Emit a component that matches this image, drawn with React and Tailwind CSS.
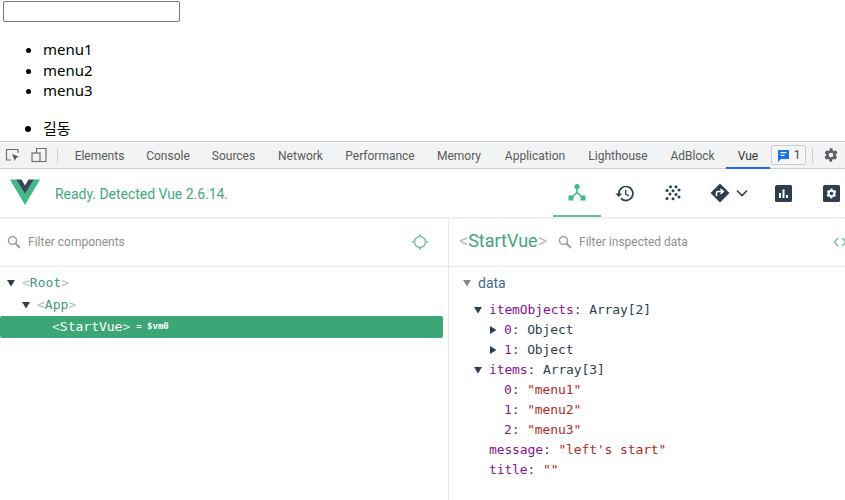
import React from "react";

function Caret({ open = true, color = "#2c3e50", size = 8 }) {
  return (
    <svg width={size} height={size} viewBox="0 0 8 8" className="shrink-0">
      {open ? <path d="M0 1h8L4 7.5z" fill={color} /> : <path d="M1 0v8l6.5-4z" fill={color} />}
    </svg>
  );
}

function Search() {
  return (
    <svg width="14" height="14" viewBox="0 0 14 14" fill="none" stroke="#9b9b9b" strokeWidth="1.5" className="shrink-0">
      <circle cx="5.5" cy="5.5" r="4" />
      <path d="M8.5 8.5 13 13" strokeWidth="1.8" />
    </svg>
  );
}

const tabs = [
  ["Elements", "w-[71px]"],
  ["Console", "w-[66px]"],
  ["Sources", "w-[65px]"],
  ["Network", "w-[69px]"],
  ["Performance", "w-[90px]"],
  ["Memory", "w-[68px]"],
  ["Application", "w-[84px]"],
  ["Lighthouse", "w-[82px]"],
  ["AdBlock", "w-[67px]"],
];

const mono = "font-['DejaVu_Sans_Mono',monospace]";

function Row({ indent, caret, k, children }) {
  return (
    <div className={`flex items-center h-5 text-[13px] leading-5 tracking-[-0.12px] ${mono} ${indent}`}>
      {caret !== undefined ? (
        <span className="w-[15px] shrink-0 flex items-center">
          <Caret open={caret} />
        </span>
      ) : null}
      <span className="text-[#881391]">{k}</span>
      <span className="text-[#444] whitespace-pre">: </span>
      {children}
    </div>
  );
}

const Val = ({ children }) => <span className="text-[#2c3e50]">{children}</span>;
const Str = ({ children }) => <span className="text-[#b02a24] whitespace-pre">{children}</span>;

export default function App() {
  return (
    <div className="w-[845px] h-[500px] overflow-hidden bg-white text-black font-['Noto_Sans','Noto_Sans_CJK_KR',sans-serif] relative">
      <div className="h-[23px] pt-px pl-[3px]">
        <input className="block w-[177px] h-[21px] border border-[#767676] rounded-[2px] bg-white outline-none" />
      </div>
      <ul className="list-disc pl-[43px] mt-4 mb-4 text-[15px] leading-[20.5px]">
        <li>menu1</li>
        <li>menu2</li>
        <li>menu3</li>
      </ul>
      <ul className="list-disc pl-[43px] mt-[14px] text-[15px] leading-[21px] font-['Noto_Sans_CJK_KR',sans-serif]">
        <li>길동</li>
      </ul>

      <div className="absolute left-0 right-0 top-[141px] bottom-0 flex flex-col bg-white">
        {/* DevTools tab bar */}
        <div className="h-[28px] shrink-0 bg-[#f1f3f4] border-y border-[#cbcdd1] flex items-center font-['Roboto',sans-serif] text-xs text-[#5a5a5a]">
          <div className="w-[64px] flex items-center shrink-0 relative h-full">
            <svg width="16" height="16" viewBox="0 0 16 16" className="ml-[5px]" fill="none">
              <path d="M6 13H1.500V2.500H13V6" stroke="#6e6e6e" strokeWidth="1.2" />
              <path d="M7 7l7 2.800-3 1.100L9.900 14z" fill="#5a5a5a" />
            </svg>
            <svg width="16" height="16" viewBox="0 0 16 16" className="ml-[10px]" fill="none" stroke="#6e6e6e" strokeWidth="1.2">
              <path d="M5.500 6V1.500H15V14.500H9" />
              <rect x="1" y="6" width="8" height="8.500" />
            </svg>
            <span className="absolute left-[57px] top-[6px] w-px h-[15px] bg-[#cbcdd1]" />
          </div>
          <div className="flex h-full">
            {tabs.map(([t, w]) => (
              <div key={t} className={`${w} shrink-0 flex items-center justify-center pt-px`}>{t}</div>
            ))}
            <div className="w-[44px] shrink-0 flex items-center justify-center text-[#333] border-b-2 border-[#1a73e8] h-[27px] pt-[2px] -mb-px">Vue</div>
          </div>
          <div className="ml-px h-[20px] w-[35px] rounded-[2px] border border-[#cbcdd1] flex items-center justify-center gap-[4px] bg-[#f5f6f7] text-[#444]">
            <svg width="13" height="13" viewBox="0 0 13 13">
              <path d="M1 1h11v9H4l-3 3z" fill="#1a73e8" />
              <path d="M3.500 3.700h6M3.500 6.300h4" stroke="#fff" strokeWidth="1.2" />
            </svg>
            <span>1</span>
          </div>
          <span className="ml-[6px] w-px h-[15px] bg-[#cbcdd1]" />
          <svg width="16" height="16" viewBox="0 0 24 24" className="ml-[10px]" fill="#5f6368">
            <path d="M19.400 13c.1-.3.1-.7.1-1s0-.7-.1-1l2.100-1.600c.2-.2.2-.4.1-.6l-2-3.500c-.1-.2-.4-.3-.6-.2l-2.500 1c-.5-.4-1.100-.7-1.700-1L14 2.400c0-.2-.2-.4-.5-.4h-3c-.2 0-.4.2-.5.4l-.4 2.700c-.6.2-1.100.6-1.700 1l-2.500-1c-.2-.1-.5 0-.6.2l-2 3.500c-.1.2-.1.4.1.6L4.600 11c0 .3-.1.7-.1 1s0 .7.1 1l-2.100 1.600c-.2.2-.2.4-.1.6l2 3.500c.1.2.4.3.6.2l2.500-1c.5.4 1.100.7 1.700 1l.4 2.700c0 .2.2.4.5.4h3c.2 0 .4-.2.5-.4l.4-2.700c.6-.2 1.100-.6 1.700-1l2.500 1c.2.1.5 0 .6-.2l2-3.500c.1-.2.1-.4-.1-.6zM12 15.500a3.500 3.500 0 1 1 0-7 3.500 3.500 0 0 1 0 7z" />
          </svg>
        </div>

        {/* Vue header */}
        <div className="h-[50px] shrink-0 flex items-center font-['Roboto',sans-serif] border-b-2 border-[#f0f0f0]">
          <svg width="30" height="26" viewBox="0 0 30 26" className="ml-[10px] mb-[2px]">
            <path d="M0 .5h6L15 15 24 .5h6L15 26z" fill="#42b883" />
            <path d="M6 .5h5.500L15 6.500 18.500.5H24L15 15z" fill="#35495e" />
          </svg>
          <span className="ml-[15px] text-sm text-[#42a882] mt-[1px] tracking-[-0.03px]">Ready. Detected Vue 2.6.14.</span>
          <div className="ml-auto -mr-[10px] flex items-center h-full">
            <div className="w-[48px] h-[48px] border-b-2 border-[#6cbc9c] flex items-center justify-center">
              <svg width="18" height="18" viewBox="0 0 18 18" fill="#42b883">
                <circle cx="9" cy="3.500" r="2.600" />
                <rect x="0.500" y="12.500" width="5" height="5" />
                <rect x="12.500" y="12.500" width="5" height="5" />
                <path d="M9 5v5.500M9 9.500 4 14M9 9.500l5 4.500" stroke="#42b883" strokeWidth="1.600" fill="none" />
              </svg>
            </div>
            <div className="w-[48px] flex items-center justify-center">
              <svg width="22" height="21" viewBox="0 0 24 24" fill="#2c3e50">
                <path d="M13 3a9 9 0 0 0-9 9H1l3.890 3.890.07.14L9 12H6a7 7 0 1 1 2.050 4.950l-1.420 1.420A9 9 0 1 0 13 3zm-1 5v5l4.250 2.520.77-1.280-3.520-2.090V8z" />
              </svg>
            </div>
            <div className="w-[48px] flex items-center justify-center">
              <svg width="16" height="16" viewBox="0 0 16 16" fill="#2c3e50">
                <circle cx="5.500" cy="1.800" r="1.500" /><circle cx="11" cy="1.800" r="1.500" />
                <circle cx="2" cy="5.500" r="1.500" /><circle cx="8" cy="5.800" r="1.500" /><circle cx="14" cy="5" r="1.500" />
                <circle cx="5" cy="9" r="1.500" /><circle cx="11" cy="9.500" r="1.500" />
                <circle cx="2" cy="13.500" r="1.500" /><circle cx="8" cy="13.800" r="1.500" /><circle cx="14" cy="12" r="1.500" />
              </svg>
            </div>
            <div className="w-[62px] flex items-center pl-[13px]">
              <svg width="20" height="20" viewBox="0 0 20 20" fill="#2c3e50">
                <path d="M10 0.500 19.500 10 10 19.500.5 10z" />
                <path d="M6.500 13v-3c0-1 .6-1.500 1.500-1.500h4.500M10.500 6l2.800 2.500-2.800 2.500" fill="none" stroke="#fff" strokeWidth="1.600" />
              </svg>
              <svg width="12" height="8" viewBox="0 0 12 8" fill="none" stroke="#2c3e50" strokeWidth="1.600" className="ml-[6px]">
                <path d="M1 1.500 6 6.500l5-5" />
              </svg>
            </div>
            <div className="w-[48px] flex items-center justify-center">
              <svg width="17" height="17" viewBox="0 0 17 17">
                <rect width="17" height="17" rx="1.500" fill="#2c3e50" />
                <path d="M4 8h2v5H4zM7.500 4.500h2V13h-2zM11 10h2v3h-2z" fill="#fff" />
              </svg>
            </div>
            <div className="w-[48px] flex items-center justify-center">
              <svg width="17" height="17" viewBox="0 0 17 17">
                <rect width="17" height="17" rx="1.500" fill="#2c3e50" />
                <path fill="#fff" transform="translate(2.500 2.500) scale(.5)" d="M19.400 13c.1-.3.1-.7.1-1s0-.7-.1-1l2.100-1.600c.2-.2.2-.4.1-.6l-2-3.500c-.1-.2-.4-.3-.6-.2l-2.500 1c-.5-.4-1.100-.7-1.700-1L14 2.400c0-.2-.2-.4-.5-.4h-3c-.2 0-.4.2-.5.4l-.4 2.700c-.6.2-1.100.6-1.700 1l-2.500-1c-.2-.1-.5 0-.6.2l-2 3.500c-.1.2-.1.4.1.6L4.600 11c0 .3-.1.7-.1 1s0 .7.1 1l-2.100 1.600c-.2.2-.2.4-.1.6l2 3.500c.1.2.4.3.6.2l2.500-1c.5.4 1.100.7 1.700 1l.4 2.700c0 .2.2.4.5.4h3c.2 0 .4-.2.5-.4l.4-2.700c.6-.2 1.100-.6 1.700-1l2.500 1c.2.1.5 0 .6-.2l2-3.500c.1-.2.1-.4-.1-.6zM12 15.500a3.500 3.500 0 1 1 0-7 3.500 3.500 0 0 1 0 7z" />
              </svg>
            </div>
          </div>
        </div>

        {/* Split panes */}
        <div className="flex-1 flex min-h-0 font-['Roboto',sans-serif]">
          <div className="w-[449px] shrink-0 border-r border-[#e8e8e8] flex flex-col">
            <div className="h-[48px] shrink-0 border-b border-[#e8e8e8] flex items-center pl-[7px] pr-[20px] pb-[2px]">
              <Search />
              <span className="ml-[7px] text-xs text-[#8f8f8f]">Filter components</span>
              <svg width="16" height="16" viewBox="0 0 16 16" fill="none" stroke="#7fbfae" strokeWidth="1.500" className="ml-auto">
                <circle cx="8" cy="8" r="5.500" />
                <path d="M8 0v3M8 13v3M0 8h3M13 8h3" />
              </svg>
            </div>
            <div className={`pt-[5px] pr-[5px] ${mono} text-[13px]`}>
              <div className="h-[22px] flex items-center pl-[7px]">
                <Caret />
                <span className="ml-[7px] text-[#b5c0bb]">&lt;</span>
                <span className="text-[#42987a]">Root</span>
                <span className="text-[#b5c0bb]">&gt;</span>
              </div>
              <div className="h-[22px] flex items-center pl-[22px]">
                <Caret />
                <span className="ml-[7px] text-[#b5c0bb]">&lt;</span>
                <span className="text-[#42987a]">App</span>
                <span className="text-[#b5c0bb]">&gt;</span>
              </div>
              <div className="h-[22px] flex items-center pl-[52px] bg-[#3ba776] rounded-[2px] text-white">
                <span className="text-[#d5eee2]">&lt;</span>
                <span>StartVue</span>
                <span className="text-[#d5eee2]">&gt;</span>
                <span className="ml-[6px] text-[9px] font-bold">= $vm0</span>
              </div>
            </div>
          </div>
          <div className="flex-1 min-w-0 flex flex-col">
            <div className="h-[48px] shrink-0 border-b border-[#e8e8e8] flex items-center pl-[10px] pb-[2px] relative overflow-hidden">
              <span className="text-lg text-[#b5c0bb] -mt-[2px]">&lt;</span>
              <span className="text-lg text-[#42a57d] -mt-[2px]">StartVue</span>
              <span className="text-lg text-[#b5c0bb] -mt-[2px]">&gt;</span>
              <span className="ml-[11px]"><Search /></span>
              <span className="ml-[7px] text-xs text-[#8f8f8f]">Filter inspected data</span>
              <svg width="14" height="10" viewBox="0 0 14 10" fill="none" stroke="#6cbcae" strokeWidth="1.400" className="absolute left-[384px] top-[18px]">
                <path d="M5 1 1.500 5 5 9M9.500 1 13 5 9.500 9" />
              </svg>
            </div>
            <div className="pt-[6px] pl-[14px]">
              <div className="h-[20px] flex items-center text-sm text-[#486887]">
                <Caret color="#7d8a96" />
                <span className="ml-[7px]">data</span>
              </div>
              <div className="pt-[7px]">
                <Row indent="pl-[11px]" caret={true} k="itemObjects"><Val>Array[2]</Val></Row>
                <Row indent="pl-[26px]" caret={false} k="0"><Val>Object</Val></Row>
                <Row indent="pl-[26px]" caret={false} k="1"><Val>Object</Val></Row>
                <Row indent="pl-[11px]" caret={true} k="items"><Val>Array[3]</Val></Row>
                <Row indent="pl-[41px]" k="0"><Str>"menu1"</Str></Row>
                <Row indent="pl-[41px]" k="1"><Str>"menu2"</Str></Row>
                <Row indent="pl-[41px]" k="2"><Str>"menu3"</Str></Row>
                <Row indent="pl-[26px]" k="message"><Str>"left's start"</Str></Row>
                <Row indent="pl-[26px]" k="title"><Str>""</Str></Row>
              </div>
            </div>
          </div>
        </div>
      </div>
    </div>
  );
}
